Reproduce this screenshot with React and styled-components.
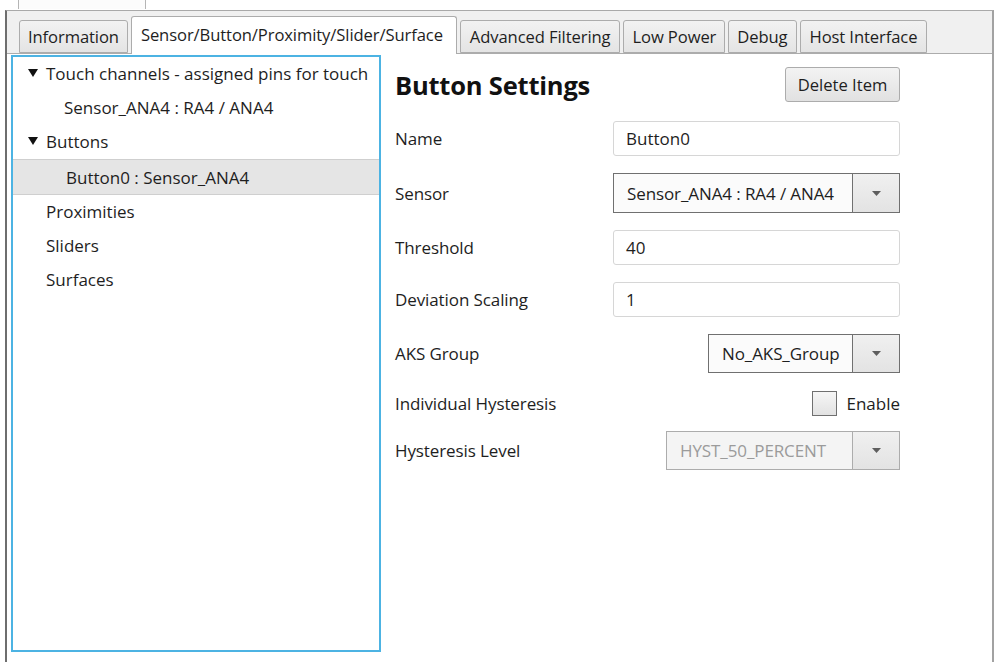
import styled, { createGlobalStyle } from "styled-components"

const GlobalStyle = createGlobalStyle`
    body {
        margin: 0;
        background: #ffffff;
        font-family: "Open Sans", "Noto Sans", sans-serif;
        color: #1b1b1b;
    }
`

const Page = styled.div`
    width: 1005px;
    height: 662px;
    overflow: hidden;
    background: #ffffff;
    display: flex;
    flex-direction: column;
`

const TopStrip = styled.div`
    height: 10px;
    display: flex;
    padding-left: 18px;
`

const PrevTab = styled.div`
    width: 126px;
    height: 9px;
    background: #fcfcfc;
    border-left: 1px solid #b5b5b5;
    border-right: 1px solid #b5b5b5;
`

const Frame = styled.div`
    flex: 1;
    margin-left: 5px;
    width: 985px;
    border-left: 2px solid #6e6e6e;
    border-right: 2px solid #a2a2a2;
    border-top: 1px solid #a9a9a9;
    background: #f0f0f0;
    display: flex;
    flex-direction: column;
`

const TabBar = styled.div`
    height: 42px;
    display: flex;
    align-items: flex-end;
    gap: 3px;
    padding-left: 12px;
`

const Tab = styled.div`
    height: ${p => (p.$active ? "38px" : "33px")};
    margin-bottom: ${p => (p.$active ? "-1px" : "0")};
    box-sizing: border-box;
    padding: 0 ${p => (p.$active ? "13px" : `${p.$pad}px`)} ${p => (p.$active ? "3px" : "0")} ${p => (p.$active ? 9 : p.$pad)}px;
    display: flex;
    align-items: center;
    font-size: 16.6px;
    color: #1e1e1e;
    border: 1px solid #acacac;
    border-bottom: ${p => (p.$active ? "none" : "1px solid #acacac")};
    border-radius: 3px 3px 0 0;
    background: ${p => (p.$active ? "#ffffff" : "linear-gradient(#f2f2f2, #e4e4e4)")};
    position: relative;
    z-index: ${p => (p.$active ? 2 : 1)};
    white-space: nowrap;
    letter-spacing: -0.1px;
`

const Content = styled.div`
    flex: 1;
    background: #ffffff;
    border-top: 1px solid #acacac;
    display: flex;
    padding: 1px 0 10px 4px;
`

const TreePanel = styled.div`
    width: 366px;
    border: 2px solid #4cb3e3;
    background: #ffffff;
`

const TreeRow = styled.div`
    height: ${p => (p.$selected ? "36px" : "34px")};
    box-sizing: border-box;
    display: flex;
    align-items: center;
    padding-left: ${p => p.$indent}px;
    padding-bottom: ${p => (p.$selected ? "0" : "2px")};
    font-size: 17px;
    color: #1e1e1e;
    background: ${p => (p.$selected ? "#e5e5e5" : "transparent")};
    border-top: ${p => (p.$selected ? "1px solid #cfcfcf" : "none")};
    border-bottom: ${p => (p.$selected ? "1px solid #cfcfcf" : "none")};
    white-space: nowrap;
`

const Caret = styled.svg`
    width: 10px;
    height: 8px;
    margin-right: 8px;
    margin-left: -18px;
`

const FormPanel = styled.div`
    width: 505px;
    margin-left: 14px;
    padding-top: 12px;
    display: flex;
    flex-direction: column;
    gap: 17px;
`

const Row = styled.div`
    height: ${p => p.$h}px;
    margin-top: ${p => p.$mt || 0}px;
    display: flex;
    align-items: center;
    justify-content: space-between;
`

const Title = styled.h1`
    margin: 0;
    font-size: 25.5px;
    font-weight: 700;
    color: #111111;
    letter-spacing: -0.2px;
`

const Label = styled.span`
    font-size: 17px;
    color: #1e1e1e;
    letter-spacing: -0.1px;
`

const Button = styled.button`
    height: 35px;
    width: 115px;
    border: 1px solid #acacac;
    border-radius: 3px;
    background: linear-gradient(#f3f3f3, #e1e1e1);
    font-family: inherit;
    font-size: 16.6px;
    color: #1e1e1e;
    padding: 0;
`

const Input = styled.div`
    width: 287px;
    height: 100%;
    box-sizing: border-box;
    border: 1px solid #d6d6d6;
    border-radius: 3px;
    display: flex;
    align-items: center;
    padding-left: 12px;
    font-size: 17px;
    color: #1e1e1e;
`

const Combo = styled.div`
    width: ${p => p.$w}px;
    height: 100%;
    box-sizing: border-box;
    border: 1px solid ${p => (p.$disabled ? "#acacac" : "#707070")};
    display: flex;
    background: ${p => (p.$disabled ? "#f4f4f4" : "#fbfbfb")};
`

const ComboText = styled.div`
    flex: 1;
    display: flex;
    align-items: center;
    padding-left: 13px;
    font-size: 17px;
    letter-spacing: -0.1px;
    color: ${p => (p.$disabled ? "#9b9b9b" : "#1e1e1e")};
    white-space: nowrap;
    overflow: hidden;
`

const ComboArrow = styled.div`
    width: 46px;
    border-left: 1px solid ${p => (p.$disabled ? "#acacac" : "#707070")};
    background: linear-gradient(#f0f0f0, #e3e3e3);
    display: flex;
    align-items: center;
    justify-content: center;
`

const CheckWrap = styled.label`
    display: flex;
    align-items: center;
    gap: 9px;
    font-size: 17px;
    color: #1e1e1e;
`

const CheckBox = styled.span`
    width: 25px;
    height: 25px;
    box-sizing: border-box;
    border: 1px solid #707070;
    background: linear-gradient(#f6f6f6, #e2e2e2);
`

const TriangleDown = () => (
  <Caret viewBox="0 0 10 8">
    <polygon points="0,0 10,0 5,8" fill="#111" />
  </Caret>
)

const Arrow = () => (
  <svg width="9" height="5" viewBox="0 0 9 5">
    <polygon points="0,0 9,0 4.5,5" fill="#5e5e5e" />
  </svg>
)

const DropDown = ({ w, value, disabled }) => (
  <Combo $w={w} $disabled={disabled}>
    <ComboText $disabled={disabled}>{value}</ComboText>
    <ComboArrow $disabled={disabled}>
      <Arrow />
    </ComboArrow>
  </Combo>
)

const tabs = [
  { label: "Information", pad: 8 },
  { label: "Sensor/Button/Proximity/Slider/Surface", active: true },
  { label: "Advanced Filtering", pad: 9 },
  { label: "Low Power", pad: 8 },
  { label: "Debug", pad: 8 },
  { label: "Host Interface", pad: 9 },
]

const App = () => {
  return (
    <Page>
      <GlobalStyle />
      <TopStrip>
        <PrevTab />
      </TopStrip>
      <Frame>
        <TabBar>
          {tabs.map(t => (
            <Tab key={t.label} $active={t.active} $pad={t.pad}>{t.label}</Tab>
          ))}
        </TabBar>
        <Content>
          <TreePanel>
            <TreeRow $indent={33}>
              <TriangleDown />
              Touch channels - assigned pins for touch
            </TreeRow>
            <TreeRow $indent={51}>Sensor_ANA4 : RA4 / ANA4</TreeRow>
            <TreeRow $indent={33}>
              <TriangleDown />
              Buttons
            </TreeRow>
            <TreeRow $indent={53} $selected>Button0 : Sensor_ANA4</TreeRow>
            <TreeRow $indent={33}>Proximities</TreeRow>
            <TreeRow $indent={33}>Sliders</TreeRow>
            <TreeRow $indent={33}>Surfaces</TreeRow>
          </TreePanel>
          <FormPanel>
            <Row $h={35}>
              <Title>Button Settings</Title>
              <Button>Delete Item</Button>
            </Row>
            <Row $h={35} $mt={2}>
              <Label>Name</Label>
              <Input>Button0</Input>
            </Row>
            <Row $h={40}>
              <Label>Sensor</Label>
              <DropDown w={287} value="Sensor_ANA4 : RA4 / ANA4" />
            </Row>
            <Row $h={35}>
              <Label>Threshold</Label>
              <Input>40</Input>
            </Row>
            <Row $h={35}>
              <Label>Deviation Scaling</Label>
              <Input>1</Input>
            </Row>
            <Row $h={39}>
              <Label>AKS Group</Label>
              <DropDown w={192} value="No_AKS_Group" />
            </Row>
            <Row $h={26}>
              <Label>Individual Hysteresis</Label>
              <CheckWrap>
                <CheckBox />
                Enable
              </CheckWrap>
            </Row>
            <Row $h={39} $mt={-2}>
              <Label>Hysteresis Level</Label>
              <DropDown w={234} value="HYST_50_PERCENT" disabled />
            </Row>
          </FormPanel>
        </Content>
      </Frame>
    </Page>
  )
}

export default App
